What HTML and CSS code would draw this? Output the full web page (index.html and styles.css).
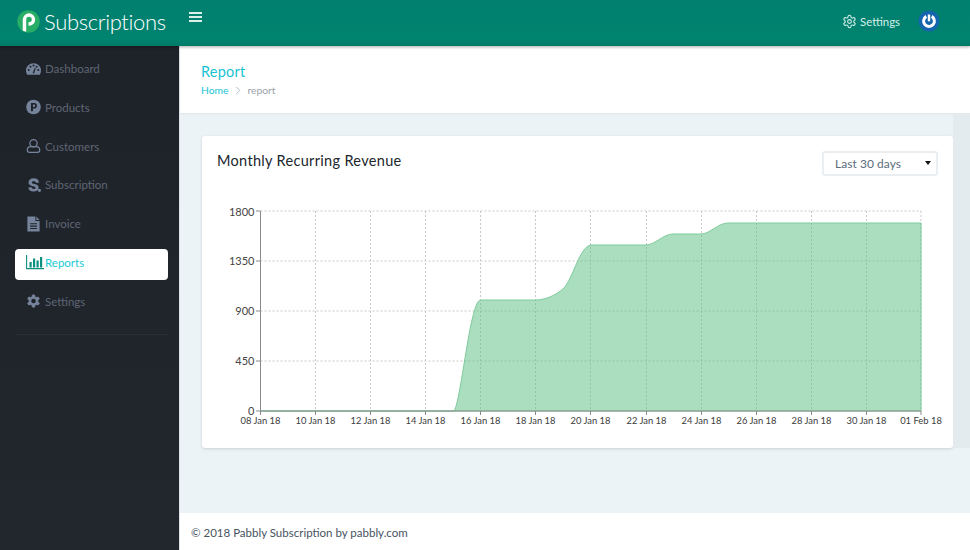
FILE: index.html
```html
<!DOCTYPE html>
<html lang="en">
<head>
<meta charset="utf-8">
<title>Report</title>
<link rel="stylesheet" href="styles.css">
</head>
<body>
<div class="app">
  <header class="topbar">
    <div class="brand">
      <svg class="brand-mark" viewBox="0 0 24 24"><circle cx="12" cy="12" r="11.7" fill="#27ad66"/><path d="M6 21.5V10a6.500 6.500 0 1 1 6.500 6.500H12v-3.600h.5a2.900 2.900 0 1 0-2.900-2.900v12.600A11.700 11.700 0 0 1 6 21.500z" fill="#fff"/></svg>
      <span class="brand-name">Subscriptions</span>
    </div>
    <div class="burger"><i></i><i></i><i></i></div>
    <div class="top-right">
      <div class="top-settings">
        <svg class="top-gear" viewBox="0 0 24 24" fill="none" stroke="#d3efe9" stroke-width="1.7"><path d="M12.22 2h-.44a2 2 0 0 0-2 2v.18a2 2 0 0 1-1 1.73l-.43.25a2 2 0 0 1-2 0l-.15-.08a2 2 0 0 0-2.73.73l-.22.38a2 2 0 0 0 .73 2.73l.15.1a2 2 0 0 1 1 1.72v.51a2 2 0 0 1-1 1.74l-.15.09a2 2 0 0 0-.73 2.73l.22.38a2 2 0 0 0 2.73.73l.15-.08a2 2 0 0 1 2 0l.43.25a2 2 0 0 1 1 1.73V20a2 2 0 0 0 2 2h.44a2 2 0 0 0 2-2v-.18a2 2 0 0 1 1-1.73l.43-.25a2 2 0 0 1 2 0l.15.08a2 2 0 0 0 2.73-.73l.22-.39a2 2 0 0 0-.73-2.73l-.15-.08a2 2 0 0 1-1-1.74v-.5a2 2 0 0 1 1-1.74l.15-.09a2 2 0 0 0 .73-2.73l-.22-.38a2 2 0 0 0-2.73-.73l-.15.08a2 2 0 0 1-2 0l-.43-.25a2 2 0 0 1-1-1.73V4a2 2 0 0 0-2-2z"/><circle cx="12" cy="12" r="3"/></svg>
        <span>Settings</span>
      </div>
      <svg class="power" viewBox="0 0 22 22"><circle cx="11" cy="11" r="10.500" fill="#1464ae"/><path d="M8.300 6.400a5.400 5.400 0 1 0 5.400 0" fill="none" stroke="#fff" stroke-width="3"/><rect x="9.800" y="4.500" width="2.400" height="6.800" fill="#fff"/></svg>
    </div>
  </header>
  <div class="shell">
    <aside class="sidebar">
      <nav class="nav">
        <a class="nav-item">
          <svg class="nav-icon" viewBox="0 0 16 16"><path d="M8 1.800A7.900 7.900 0 0 0 0 9.700c0 1.600.5 3.100 1.300 4.300h13.400c.8-1.200 1.300-2.700 1.300-4.300A7.900 7.900 0 0 0 8 1.800z" fill="#76849b"/><g fill="#1f232a"><circle cx="2.900" cy="9" r="1.100"/><circle cx="4.800" cy="5.600" r="1.100"/><circle cx="8" cy="4.300" r="1.100"/><circle cx="13.100" cy="9" r="1.100"/><circle cx="11.300" cy="5.600" r="1.100"/><path d="M7 12.500l2.400-5.800 1 .4-1.700 5.400z"/></g></svg>
          <span>Dashboard</span>
        </a>
        <a class="nav-item">
          <svg class="nav-icon" viewBox="0 0 16 16"><circle cx="8" cy="8" r="7.800" fill="#76849b"/><path d="M5.300 12.600V3.600h3.400a3 3 0 0 1 0 6H7.400v3zM7.400 5.300v2.700h1.100a1.350 1.350 0 0 0 0-2.700z" fill="#1f232a"/></svg>
          <span>Products</span>
        </a>
        <a class="nav-item">
          <svg class="nav-icon" viewBox="0 0 16 16" fill="none" stroke="#76849b" stroke-width="1.300"><circle cx="8" cy="5" r="3.900"/><path d="M5.200 8.600h5.600c2 0 3.800 1.400 3.800 3.400v.6c0 1.200-1 2.200-2.200 2.200H3.600c-1.200 0-2.200-1-2.200-2.200V12c0-2 1.800-3.400 3.800-3.400z"/></svg>
          <span>Customers</span>
        </a>
        <a class="nav-item">
          <svg class="nav-icon" viewBox="0 0 16 16"><path d="M10.800 5.700c-.2-1.200-1-1.800-2.500-1.800-1.300 0-2.100.5-2.100 1.300 0 .9.800 1.200 2.900 1.600 3 .6 4.300 1.700 4.300 3.900 0 2.700-2.100 4.300-5.300 4.300-3.500 0-5.400-1.600-5.600-4.400l3.500-.2c.1 1.200.9 1.800 2.200 1.800 1.300 0 2-.5 2-1.300 0-.9-.8-1.200-2.900-1.600C3.900 8.700 2.700 7.500 2.700 5.400 2.700 2.600 4.900.9 8.300.9c3.200 0 5.300 1.500 5.600 4.600z" fill="#76849b"/><circle cx="14.300" cy="13.700" r="1.700" fill="#76849b"/></svg>
          <span>Subscription</span>
        </a>
        <a class="nav-item">
          <svg class="nav-icon" viewBox="0 0 16 16"><path d="M1.500 0h8.500v4.800h4.500V16h-13z" fill="#76849b"/><path d="M11 0l3.500 3.700H11z" fill="#76849b"/><path d="M4.300 7.200h7.400v1.100H4.300zM4.300 9.700h7.400v1.100H4.300zM4.300 12.200h7.400v1.100H4.300z" fill="#1f232a"/></svg>
          <span>Invoice</span>
        </a>
        <a class="nav-item nav-item-active">
          <svg class="nav-icon nav-icon-wide" viewBox="0 0 18 16"><path d="M.6 1v13.600h17.400" fill="none" stroke="#0d8f80" stroke-width="1.100"/><path d="M3.500 8h2.200v5.400H3.500zM7 4.400h2.200v9H7zM10.500 6.600h2.200v6.800h-2.200zM14 3h2.200v10.400H14z" fill="#0d8f80"/></svg>
          <span>Reports</span>
        </a>
        <a class="nav-item">
          <svg class="nav-icon" viewBox="0 0 24 24"><path fill="#76849b" stroke="#76849b" stroke-width="1.500" d="M12.220 2h-.440a2 2 0 0 0-2 2v.180a2 2 0 0 1-1 1.730l-.430.250a2 2 0 0 1-2 0l-.150-.080a2 2 0 0 0-2.730.730l-.220.380a2 2 0 0 0 .730 2.730l.150.100a2 2 0 0 1 1 1.720v.510a2 2 0 0 1-1 1.740l-.150.090a2 2 0 0 0-.730 2.730l.220.380a2 2 0 0 0 2.730.730l.150-.080a2 2 0 0 1 2 0l.430.250a2 2 0 0 1 1 1.730V20a2 2 0 0 0 2 2h.440a2 2 0 0 0 2-2v-.180a2 2 0 0 1 1-1.730l.430-.250a2 2 0 0 1 2 0l.150.080a2 2 0 0 0 2.730-.730l.220-.390a2 2 0 0 0-.730-2.730l-.150-.080a2 2 0 0 1-1-1.740v-.500a2 2 0 0 1 1-1.740l.150-.090a2 2 0 0 0 .730-2.730l-.220-.380a2 2 0 0 0-2.730-.730l-.150.080a2 2 0 0 1-2 0l-.430-.250a2 2 0 0 1-1-1.730V4a2 2 0 0 0-2-2z"/><circle cx="12" cy="12" r="3.600" fill="#1f232a"/></svg>
          <span>Settings</span>
        </a>
      </nav>
      <div class="nav-rule"></div>
    </aside>
    <main class="content">
      <section class="page-head">
        <h1 class="page-title">Report</h1>
        <div class="crumbs">
          <span class="crumb-link">Home</span>
          <svg class="crumb-sep" viewBox="0 0 6 10" fill="none" stroke="#a9b4bb" stroke-width="1"><path d="M1 1l4 4-4 4"/></svg>
          <span class="crumb-here">report</span>
        </div>
      </section>
      <section class="report-row">
        <div class="report-main">
          <div class="card">
            <div class="card-head">
              <h2 class="card-title">Monthly Recurring Revenue</h2>
              <div class="range-select"><span class="range-label">Last 30 days</span><i class="caret"></i></div>
            </div>
            <svg class="chart" viewBox="202 190 751 258">
              <g class="grid">
                <path d="M260.500 211H921M260.500 261H921M260.500 311H921M260.500 361H921"/>
                <path d="M315.500 211V411M370.500 211V411M425.500 211V411M480.500 211V411M535.500 211V411M590.500 211V411M646.500 211V411M701.500 211V411M756.500 211V411M811.500 211V411M866.500 211V411M921 211V411"/>
              </g>
              <path class="area" d="M260.500 411H454C459 405 466 345 472 320C475 308 477 300 481 300H535C545 300 555 296 564 288C573 278 580 246 591 245H646C655 245 663 234 673 234H701C710 234 718 223 728 223H921V411z"/>
              <path class="axis" d="M260.500 211V411M256 211H260.500M256 261H260.500M256 311H260.500M256 361H260.500M256 411H921M315.500 411V415M370.500 411V415M425.500 411V415M480.500 411V415M535.500 411V415M590.500 411V415M646.500 411V415M701.500 411V415M756.500 411V415M811.500 411V415M866.500 411V415M921 411V415M260.500 411V415"/>
              <g class="y-labels">
                <text x="254.500" y="216">1800</text>
                <text x="254.500" y="265">1350</text>
                <text x="254.500" y="315">900</text>
                <text x="254.500" y="365">450</text>
                <text x="254.500" y="415">0</text>
              </g>
              <g class="x-labels">
                <text x="260.500" y="424">08 Jan 18</text>
                <text x="315.500" y="424">10 Jan 18</text>
                <text x="370.500" y="424">12 Jan 18</text>
                <text x="425.500" y="424">14 Jan 18</text>
                <text x="480.500" y="424">16 Jan 18</text>
                <text x="535.500" y="424">18 Jan 18</text>
                <text x="590.500" y="424">20 Jan 18</text>
                <text x="646.500" y="424">22 Jan 18</text>
                <text x="701.500" y="424">24 Jan 18</text>
                <text x="756.500" y="424">26 Jan 18</text>
                <text x="811.500" y="424">28 Jan 18</text>
                <text x="866.500" y="424">30 Jan 18</text>
                <text x="921" y="424">01 Feb 18</text>
              </g>
            </svg>
          </div>
        </div>
        <div class="report-strip"></div>
      </section>
      <div class="spacer"></div>
      <footer class="footer">© 2018 Pabbly Subscription by pabbly.com</footer>
    </main>
  </div>
</div>
</body>
</html>
```
FILE: styles.css
```css
* { box-sizing: border-box; }
html, body { margin: 0; padding: 0; }
body { width: 970px; height: 550px; overflow: hidden; font-family: Lato, "Noto Sans", sans-serif; background: #ecf3f6; }
.app { display: flex; flex-direction: column; height: 550px; }

.topbar { flex: 0 0 46px; display: flex; align-items: flex-start; background: linear-gradient(#007f6f, #00836f 85%, #007a68); box-shadow: 0 1px 3px rgba(0,0,0,.35); position: relative; z-index: 2; }
.brand { display: flex; align-items: center; margin: 10px 0 0 17px; width: 172px; height: 23px; }
.brand-mark { width: 23px; height: 23px; flex: none; }
.brand-name { margin-left: 4px; font-weight: 300; font-size: 22px; color: #fff; letter-spacing: -.35px; line-height: 23px; }
.burger { margin-top: 12px; width: 13px; display: flex; flex-direction: column; gap: 2px; }
.burger i { display: block; height: 2px; background: #d9f0eb; }
.top-right { margin-left: auto; margin-right: 30px; margin-top: 10px; display: flex; align-items: center; gap: 18px; }
.top-settings { display: flex; align-items: center; gap: 3px; font-size: 11.400px; color: #d3efe9; }
.top-gear { width: 15px; height: 15px; }
.power { width: 22px; height: 22px; }

.shell { flex: 1; display: flex; min-height: 0; }
.sidebar { flex: 0 0 180px; background: linear-gradient(#1e2229, #22272d); border-right: 1px solid #d9e2e6; padding: 7px 11px 0 15px; }
.nav { display: flex; flex-direction: column; gap: 7.750px; }
.nav-item { display: flex; align-items: center; height: 31px; padding-left: 11px; font-size: 11.500px; color: #5f6674; border-radius: 4px; }
.nav-item span { margin-left: 4px; }
.nav-item-active { margin: 2.500px 0 -2.500px; padding-bottom: 5px; background: #fff; color: #1ccad6; }
.nav-icon { width: 15px; height: 16px; flex: none; }
.nav-icon-wide { width: 18px; margin-right: -3px; }
.nav-rule { margin-top: 17px; height: 1px; background: #2a2f36; }

.content { flex: 1; display: flex; flex-direction: column; min-width: 0; }
.page-head { flex: 0 0 67px; background: #fff; padding: 17px 0 0 21px; box-shadow: 0 1px 2px rgba(120,140,150,.12); }
.page-title { margin: 0; font-size: 14.500px; line-height: 18px; font-weight: 400; color: #17c3d3; letter-spacing: .2px; }
.crumbs { display: flex; align-items: center; gap: 6.500px; margin-top: 2px; font-size: 10.300px; line-height: 14px; }
.crumb-link { color: #17c3d3; }
.crumb-sep { width: 6px; height: 9px; }
.crumb-here { color: #9aa4ab; }

.report-row { flex: 0 0 335px; display: flex; }
.report-main { flex: 1; padding: 23px 0 0 22px; }
.report-strip { flex: 0 0 17px; background: #e3ebef; }
.card { height: 312px; width: 751px; background: #fff; border-radius: 3px; box-shadow: 0 1px 3px rgba(90,110,120,.25); }
.card-head { height: 54px; display: flex; justify-content: space-between; align-items: flex-start; padding: 14px 15px 0 15px; }
.card-title { margin: 0; font-size: 14.500px; line-height: 21px; font-weight: 400; color: #20262c; letter-spacing: .32px; }
.range-select { position: relative; width: 116px; height: 25px; margin-top: 1px; border: 2px solid #ebeef0; border-radius: 3px; padding-left: 11px; font-size: 12px; line-height: 22px; color: #5b6b7b; letter-spacing: .05px; }
.range-label { display: block; height: 17px; overflow: hidden; }
.caret { position: absolute; right: 5px; top: 8px; border: 3px solid transparent; border-top: 4px solid #111; border-bottom: 0; }

.chart { display: block; width: 751px; height: 258px; }
.grid path { fill: none; stroke: #c9c9c9; stroke-width: 1; stroke-dasharray: 2 2; }
.area { fill: #60c084; fill-opacity: .53; stroke: #7fcb9c; stroke-width: 1; }
.axis { fill: none; stroke: #8a8a8a; stroke-width: 1; }
.y-labels text { font-size: 11px; fill: #444; text-anchor: end; }
.x-labels text { font-size: 9.400px; fill: #3c3c3c; text-anchor: middle; }

.spacer { flex: 1; }
.footer { flex: 0 0 37px; background: #fff; padding: 12px 0 0 11px; font-size: 11.500px; line-height: 16px; color: #47535f; }
```
